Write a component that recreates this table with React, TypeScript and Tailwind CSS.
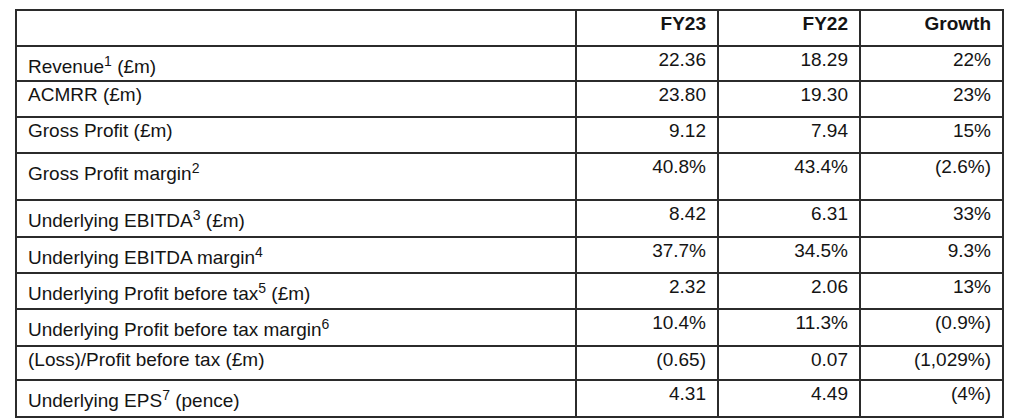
import React from "react";

type Row = {
  label: string;
  sup?: string;
  suffix?: string;
  a: string;
  b: string;
  c: string;
  h: string;
};

const rows: Row[] = [
  { label: "Revenue", sup: "1", suffix: " (£m)", a: "22.36", b: "18.29", c: "22%", h: "h-[35px]" },
  { label: "ACMRR (£m)", a: "23.80", b: "19.30", c: "23%", h: "h-[36px]" },
  { label: "Gross Profit (£m)", a: "9.12", b: "7.94", c: "15%", h: "h-[36px]" },
  { label: "Gross Profit margin", sup: "2", a: "40.8%", b: "43.4%", c: "(2.6%)", h: "h-[47px]" },
  { label: "Underlying EBITDA", sup: "3", suffix: " (£m)", a: "8.42", b: "6.31", c: "33%", h: "h-[37px]" },
  { label: "Underlying EBITDA margin", sup: "4", a: "37.7%", b: "34.5%", c: "9.3%", h: "h-[36px]" },
  { label: "Underlying Profit before tax", sup: "5", suffix: " (£m)", a: "2.32", b: "2.06", c: "13%", h: "h-[36px]" },
  { label: "Underlying Profit before tax margin", sup: "6", a: "10.4%", b: "11.3%", c: "(0.9%)", h: "h-[37px]" },
  { label: "(Loss)/Profit before tax (£m)", a: "(0.65)", b: "0.07", c: "(1,029%)", h: "h-[34px]" },
  { label: "Underlying EPS", sup: "7", suffix: " (pence)", a: "4.31", b: "4.49", c: "(4%)", h: "h-[37px]" },
];

const cell = "border-2 border-[#2b2b2b] align-top pt-[2px] px-[11px]";

export default function App() {
  return (
    <div className="w-[1024px] h-[419px] bg-white overflow-hidden pt-[9px] pl-[15px] text-[#141414] font-['Liberation_Sans',Arial,sans-serif] text-[19px] leading-[22px]">
      <table className="table-fixed border-collapse w-[987px]">
        <colgroup>
          <col className="w-[560px]" />
          <col className="w-[142px]" />
          <col className="w-[142px]" />
          <col className="w-[143px]" />
        </colgroup>
        <thead>
          <tr className="h-[36px]">
            <th className={cell}></th>
            <th className={`${cell} text-right font-bold`}>FY23</th>
            <th className={`${cell} text-right font-bold`}>FY22</th>
            <th className={`${cell} text-right font-bold`}>Growth</th>
          </tr>
        </thead>
        <tbody>
          {rows.map((r) => (
            <tr key={r.label} className={r.h}>
              <td className={`${cell} text-left whitespace-nowrap`}>
                {r.label}
                {r.sup && (
                  <span className="text-[14px] align-[7px] leading-[24px]">{r.sup}</span>
                )}
                {r.suffix}
              </td>
              <td className={`${cell} text-right`}>{r.a}</td>
              <td className={`${cell} text-right`}>{r.b}</td>
              <td className={`${cell} text-right`}>{r.c}</td>
            </tr>
          ))}
        </tbody>
      </table>
    </div>
  );
}
